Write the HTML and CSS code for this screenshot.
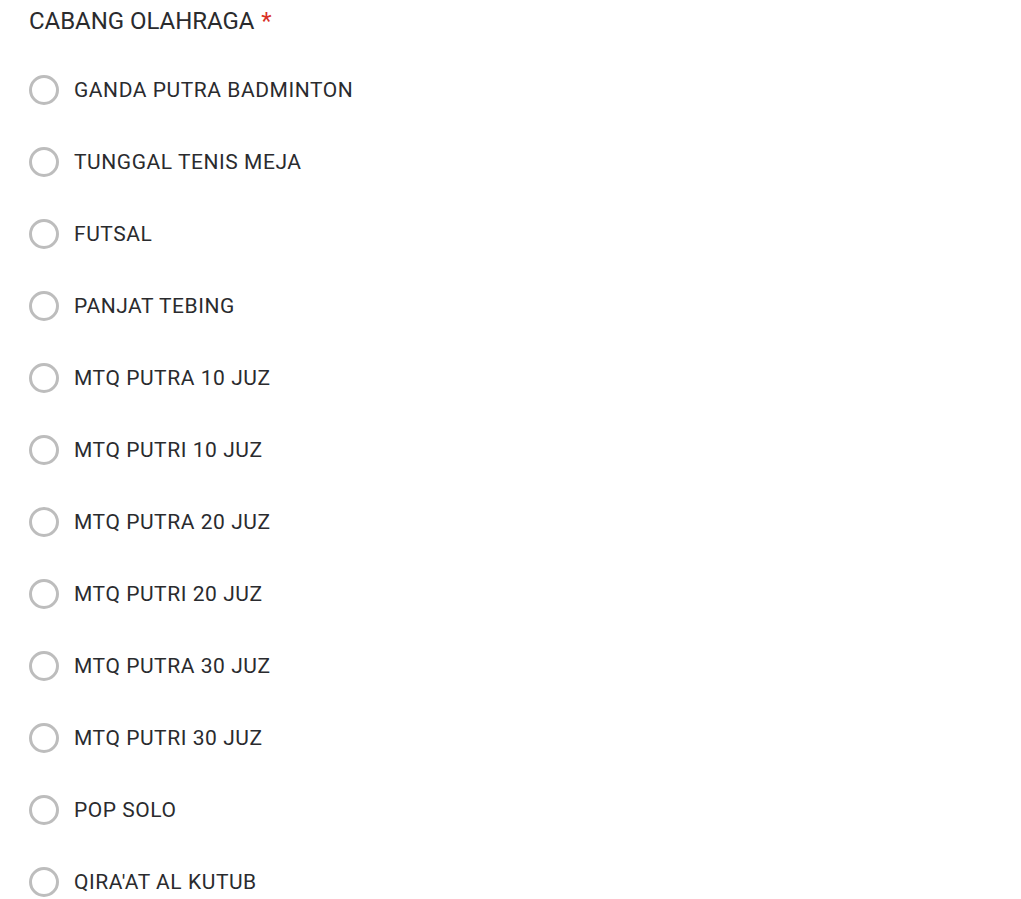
FILE: index.html
```html
<!DOCTYPE html>
<html>
<head>
<meta charset="utf-8">
<link rel="stylesheet" href="styles.css">
</head>
<body>
<div class="question">
  <div class="title">CABANG OLAHRAGA<span class="req">*</span></div>
  <div class="options">
    <label class="option"><span class="radio"></span><span class="label">GANDA PUTRA BADMINTON</span></label>
    <label class="option"><span class="radio"></span><span class="label">TUNGGAL TENIS MEJA</span></label>
    <label class="option"><span class="radio"></span><span class="label">FUTSAL</span></label>
    <label class="option"><span class="radio"></span><span class="label">PANJAT TEBING</span></label>
    <label class="option"><span class="radio"></span><span class="label">MTQ PUTRA 10 JUZ</span></label>
    <label class="option"><span class="radio"></span><span class="label">MTQ PUTRI 10 JUZ</span></label>
    <label class="option"><span class="radio"></span><span class="label">MTQ PUTRA 20 JUZ</span></label>
    <label class="option"><span class="radio"></span><span class="label">MTQ PUTRI 20 JUZ</span></label>
    <label class="option"><span class="radio"></span><span class="label">MTQ PUTRA 30 JUZ</span></label>
    <label class="option"><span class="radio"></span><span class="label">MTQ PUTRI 30 JUZ</span></label>
    <label class="option"><span class="radio"></span><span class="label">POP SOLO</span></label>
    <label class="option"><span class="radio"></span><span class="label">QIRA'AT AL KUTUB</span></label>
  </div>
</div>
</body>
</html>
```
FILE: styles.css
```css
html, body {
  margin: 0;
  padding: 0;
  background: #ffffff;
}
body {
  font-family: Roboto, "Liberation Sans", sans-serif;
  color: #2a2b2e;
}
.question {
  padding: 3px 0 0 29px;
}
.title {
  font-size: 24px;
  line-height: 36px;
  height: 51px;
  letter-spacing: -0.05px;
}
.req {
  color: #d93025;
  margin-left: 7px;
}
.options {
  display: flex;
  flex-direction: column;
}
.option {
  display: flex;
  align-items: center;
  height: 72px;
}
.radio {
  box-sizing: border-box;
  width: 30px;
  height: 30px;
  border: 3px solid #bdbdbd;
  border-radius: 50%;
  flex: none;
}
.label {
  margin-left: 15px;
  font-size: 21px;
  line-height: 72px;
  letter-spacing: 0.55px;
}
```
